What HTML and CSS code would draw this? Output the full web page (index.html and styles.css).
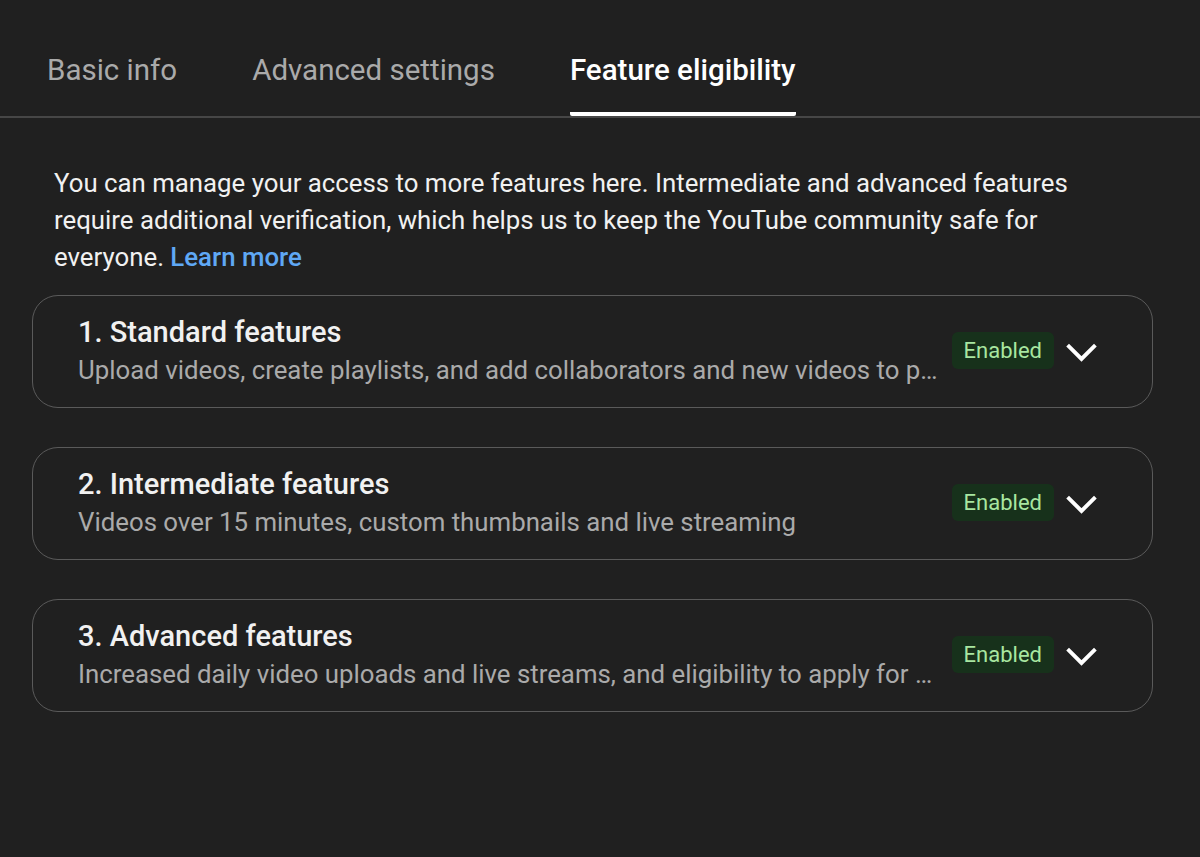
FILE: index.html
```html
<!DOCTYPE html>
<html lang="en">
<head>
  <meta charset="UTF-8" />
  <meta name="viewport" content="width=device-width, initial-scale=1.0" />
  <title>Feature eligibility</title>
  <link rel="stylesheet" href="styles.css">
</head>
<body>
<nav class="tabs">
  <a href="#" class="tab">Basic info</a>
  <a href="#" class="tab">Advanced settings</a>
  <a href="#" class="tab active">Feature eligibility</a>
</nav>

<p class="intro">
  You can manage your access to more features here. Intermediate and advanced features
  require additional verification, which helps us to keep the YouTube community safe for
  everyone. <a href="#" class="learn-more">Learn more</a>
</p>

<!-- Feature levels -->
<div class="features">
  <div class="feature-card">
    <div class="feature-text">
      <div class="feature-title">1. Standard features</div>
      <div class="feature-desc">Upload videos, create playlists, and add collaborators and new videos to playlists</div>
    </div>
    <span class="badge">Enabled</span>
    <svg class="chevron" viewBox="0 0 24 24"><path d="M3 8.5l9 9 9-9" /></svg>
  </div>

  <div class="feature-card">
    <div class="feature-text">
      <div class="feature-title">2. Intermediate features</div>
      <div class="feature-desc">Videos over 15 minutes, custom thumbnails and live streaming</div>
    </div>
    <span class="badge">Enabled</span>
    <svg class="chevron" viewBox="0 0 24 24"><path d="M3 8.5l9 9 9-9" /></svg>
  </div>

  <div class="feature-card">
    <div class="feature-text">
      <div class="feature-title">3. Advanced features</div>
      <div class="feature-desc">Increased daily video uploads and live streams, and eligibility to apply for YouTube Partner Programme</div>
    </div>
    <span class="badge">Enabled</span>
    <svg class="chevron" viewBox="0 0 24 24"><path d="M3 8.5l9 9 9-9" /></svg>
  </div>
</div>
</body>
</html>
```

FILE: styles.css
```css
body {
  font-family: Roboto, "Noto Sans", sans-serif;
  background-color: #202020;
  color: #f1f1f1;
  margin: 0;
  padding: 0;
  height: 857px;
  overflow: hidden;
}

.tabs {
  display: flex;
  gap: 75px;
  padding: 0 47px;
  border-bottom: 2px solid #464646;
  height: 118px;
  box-sizing: border-box;
}

.tab {
  color: #aaa;
  text-decoration: none;
  font-size: 29.5px;
  padding-top: 53px;
  border-bottom: 4px solid transparent;
  box-sizing: border-box;
}

.tab.active {
  color: #fff;
  font-weight: 500;
  border-bottom-color: #fff;
  border-radius: 2px;
}

.intro {
  margin: 0;
  padding: 47px 54px 0;
  width: 1045px;
  font-size: 25.8px;
  line-height: 37px;
  color: #f1f1f1;
}

.learn-more {
  color: #5fa8f5;
  text-decoration: none;
  font-weight: 500;
}

.features {
  display: flex;
  flex-direction: column;
  gap: 39px;
  margin: 19px 47px 0 32px;
}

.feature-card {
  display: flex;
  align-items: center;
  height: 113px;
  box-sizing: border-box;
  border: 1.5px solid #5a5a5a;
  border-radius: 26px;
  padding: 0 52px 2px 45px;
}

.feature-text {
  flex: 1;
  min-width: 0;
  margin-right: 10px;
}

.feature-title {
  font-size: 29px;
  font-weight: 500;
  color: #f1f1f1;
  line-height: 38px;
}

.feature-desc {
  font-size: 25.8px;
  color: #aaa;
  line-height: 38px;
  white-space: nowrap;
  overflow: hidden;
  text-overflow: ellipsis;
}

.badge {
  background-color: #17311b;
  color: #a8e6a0;
  font-size: 22px;
  padding: 4px 12px;
  border-radius: 6px;
  line-height: 29px;
}

.chevron {
  width: 37px;
  height: 37px;
  margin-left: 9px;
  fill: none;
  stroke: #fff;
  stroke-width: 2.5;
}
```
